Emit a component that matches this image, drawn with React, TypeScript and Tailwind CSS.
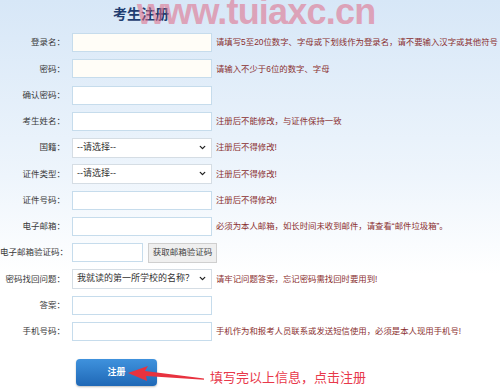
import { ChevronDown } from "lucide-react";

type Row = {
  label: string;
  kind: "input" | "select" | "verify";
  value?: string;
  hint?: string;
  cream?: boolean;
};

const rows: Row[] = [
  {
    label: "登录名：",
    kind: "input",
    cream: true,
    hint: "请填写5至20位数字、字母或下划线作为登录名，请不要输入汉字或其他符号",
  },
  { label: "密码：", kind: "input", cream: true, hint: "请输入不少于6位的数字、字母" },
  { label: "确认密码：", kind: "input" },
  { label: "考生姓名：", kind: "input", hint: "注册后不能修改，与证件保持一致" },
  { label: "国籍：", kind: "select", value: "--请选择--", hint: "注册后不得修改!" },
  { label: "证件类型：", kind: "select", value: "--请选择--", hint: "注册后不得修改!" },
  { label: "证件号码：", kind: "input", hint: "注册后不得修改!" },
  {
    label: "电子邮箱：",
    kind: "input",
    hint: "必须为本人邮箱，如长时间未收到邮件，请查看“邮件垃圾箱”。",
  },
  { label: "电子邮箱验证码：", kind: "verify" },
  {
    label: "密码找回问题：",
    kind: "select",
    value: "我就读的第一所学校的名称？",
    hint: "请牢记问题答案，忘记密码需找回时要用到!",
  },
  { label: "答案：", kind: "input" },
  {
    label: "手机号码：",
    kind: "input",
    hint: "手机作为和报考人员联系或发送短信使用，必须是本人现用手机号!",
  },
];

function Field({ row }: { row: Row }) {
  if (row.kind === "select") {
    return (
      <div className="flex h-[20px] w-[140px] items-center justify-between border border-[#d5dde4] bg-white pl-[4px] pr-[4px] text-[9px] text-[#333]">
        <span>{row.value}</span>
        <ChevronDown size={9} strokeWidth={3.5} className="text-[#222]" />
      </div>
    );
  }
  if (row.kind === "verify") {
    return (
      <div className="flex items-center">
        <div className="h-[19px] w-[71px] border border-[#c6dcec] bg-white" />
        <div className="ml-[5px] flex h-[20px] w-[69px] items-center justify-center border border-[#cfcfcf] bg-[#efefef] text-[8.5px] text-[#444]">
          获取邮箱验证码
        </div>
      </div>
    );
  }
  return (
    <div
      className={`h-[19px] w-[140px] border border-[#c6dcec] ${
        row.cream ? "bg-[#fffdf7]" : "bg-white"
      }`}
    />
  );
}

export default function App() {
  return (
    <div
      className="relative h-[392px] w-[500px] overflow-hidden bg-[linear-gradient(to_bottom,#d7e7f7,#eef5fc_45%,#ffffff_70%)]"
      style={{ fontFamily: '"Liberation Sans", "Noto Sans CJK SC", sans-serif' }}
    >
      <div className="flex h-[29.5px] items-center pl-[113px] text-[14px] font-bold text-[#1f3d70]">
        考生注册
      </div>

      <div className="flex flex-col">
        {rows.map((row) => (
          <div key={row.label} className="flex h-[26.25px] items-center">
            <div className="w-[65px] whitespace-nowrap text-right text-[8.5px] text-[#3a3a3a]">
              {row.label}
            </div>
            <div className="ml-[7px]">
              <Field row={row} />
            </div>
            {row.hint && (
              <div className="ml-[4px] whitespace-nowrap text-[8.4px] text-[#8a2f2f]">
                {row.hint}
              </div>
            )}
          </div>
        ))}
      </div>

      <div className="relative mt-[13px] flex items-center">
        <button className="ml-[76px] flex h-[27px] w-[81px] items-center justify-center rounded-[4px] bg-[linear-gradient(to_bottom,#3f92dd,#1f68b6)] text-[9px] font-bold text-white shadow-[0_1px_2px_rgba(0,0,0,0.25)]">
          注册
        </button>
        <div className="ml-[53px] mt-[10px] whitespace-nowrap text-[13px] text-[#e8384a]">
          填写完以上信息，点击注册
        </div>
        <svg
          className="absolute left-[120px] top-[2px]"
          width="90"
          height="28"
          viewBox="0 0 90 28"
        >
          <polygon
            points="8,13 28,6 25,11 84,18.5 84,19.8 26,16 27,21"
            fill="#e8323f"
          />
        </svg>
      </div>

      <div className="pointer-events-none absolute left-[137px] top-[-6px] whitespace-nowrap text-[36px] font-bold leading-none tracking-[-0.8px] text-[#e06a86] opacity-55">
        www.tuiaxc.cn
      </div>
    </div>
  );
}
